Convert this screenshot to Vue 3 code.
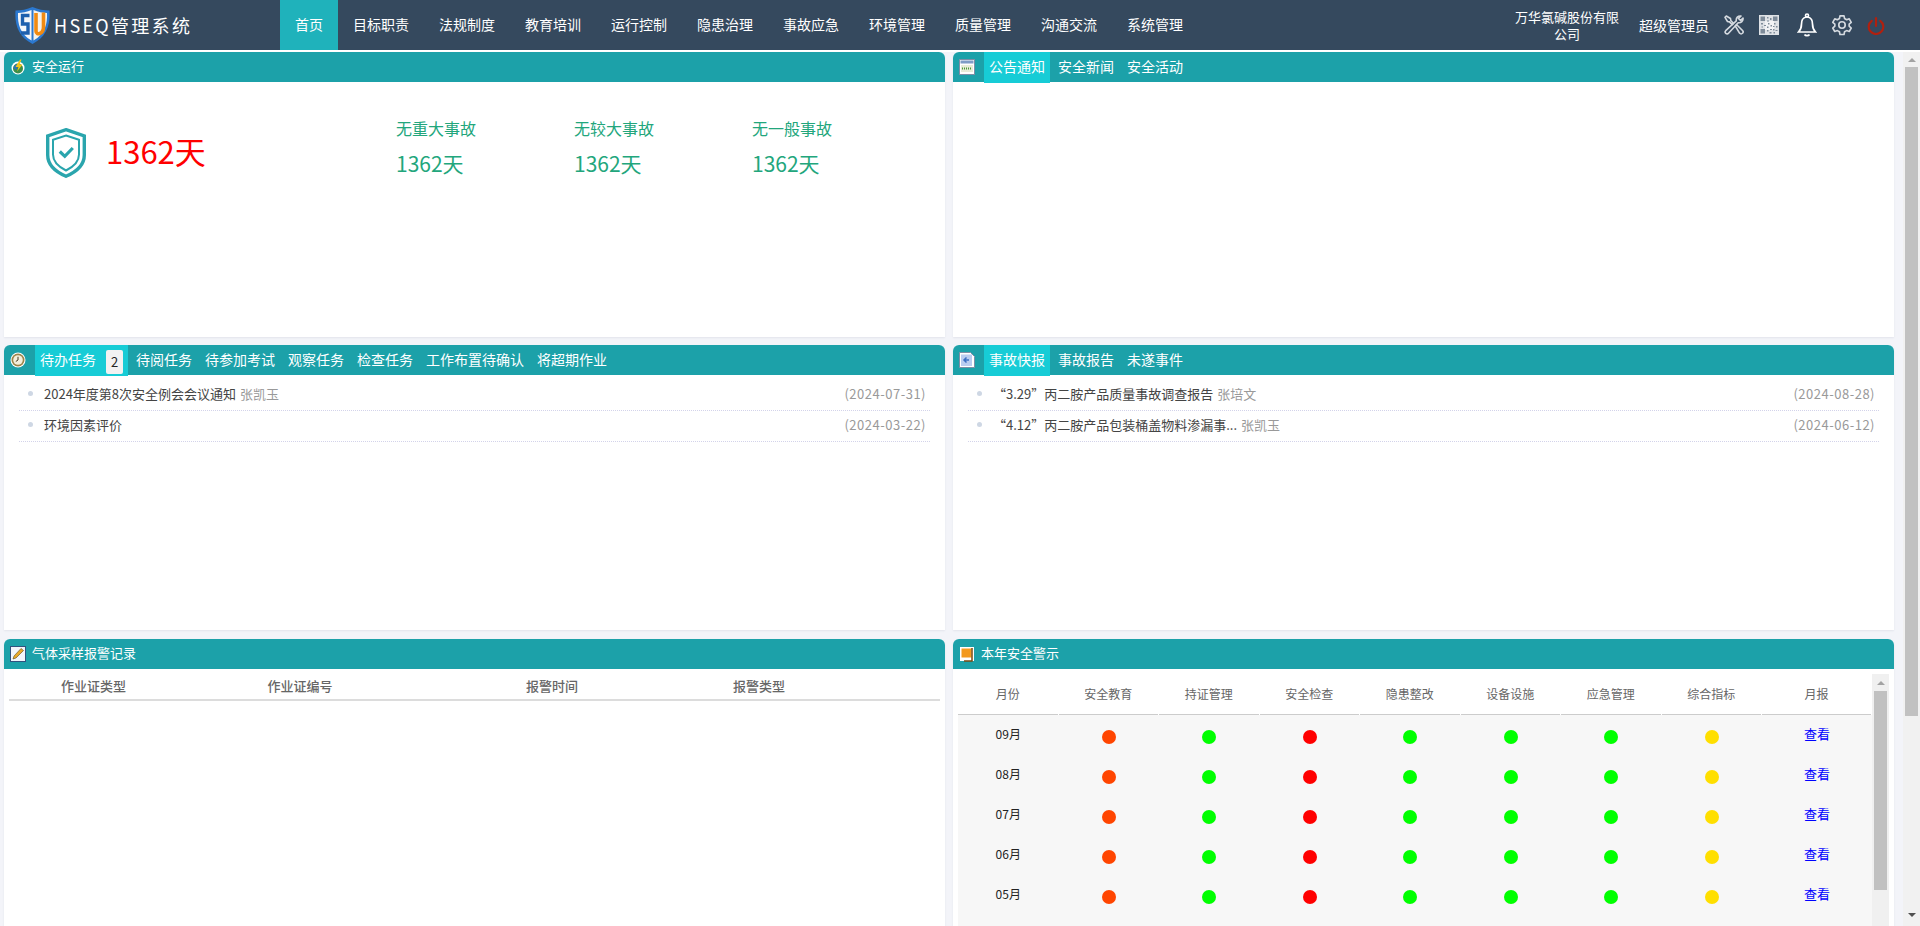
<script setup>
const nav = ['首页','目标职责','法规制度','教育培训','运行控制','隐患治理','事故应急','环境管理','质量管理','沟通交流','系统管理']
const stats = ['无重大事故','无较大事故','无一般事故']
const todo = [
  { t: '2024年度第8次安全例会会议通知', a: '张凯玉', d: '(2024-07-31)' },
  { t: '环境因素评价', a: '', d: '(2024-03-22)' }
]
const acc = [
  { t: '“3.29”丙二胺产品质量事故调查报告', a: '张培文', d: '(2024-08-28)' },
  { t: '“4.12”丙二胺产品包装桶盖物料渗漏事...', a: '张凯玉', d: '(2024-06-12)' }
]
const todoTabs = ['待阅任务','待参加考试','观察任务','检查任务','工作布置待确认','将超期作业']
const gasCols = ['作业证类型','作业证编号','报警时间','报警类型','']
const warnCols = ['月份','安全教育','持证管理','安全检查','隐患整改','设备设施','应急管理','综合指标','月报']
const months = ['09月','08月','07月','06月','05月']
const dots = ['#ff4500','#00ff00','#ff0000','#00ff00','#00ff00','#00ff00','#ffdf00']
</script>

<template>
  <div class="app">
    <header class="top">
      <div class="brand">
        <svg class="logo" viewBox="0 0 35 37">
          <path d="M17.500 0 C23 2.500 29 3.500 34.500 3.500 C35.500 18 31.500 30 17.500 37 C3.500 30 -0.500 18 0.500 3.500 C6 3.500 12 2.500 17.500 0Z" fill="#2b78d0"/>
          <path d="M16.500 3 C12 5 7 6 3 6 C2.500 17 5 27 16.500 33.500Z" fill="#f4f6fa"/>
          <path d="M18.500 3 C23 5 28 6 32 6 C32.500 17 30 27 18.500 33.500Z" fill="#f6f2ea"/>
          <path d="M14.500 8.500 H7.500 V17 H13 V26 H6" fill="none" stroke="#1d5fae" stroke-width="3.400"/>
          <path d="M21 6 V24 C21 29 28.500 27 28.500 20 V5.500" fill="none" stroke="#f08a12" stroke-width="3.600"/>
        </svg>
        <span class="brand-name">HSEQ管理系统</span>
      </div>
      <nav class="nav">
        <a v-for="(n, i) in nav" :key="n" class="nav-item" :class="{ on: i === 0 }">{{ n }}</a>
      </nav>
      <div class="top-right">
        <div class="company">万华氯碱股份有限公司</div>
        <div class="user">超级管理员</div>
        <svg class="ti i-tool" viewBox="0 0 20 20" fill="none" stroke="#d4d9df" stroke-width="1.600" stroke-linejoin="round">
          <path d="M12.300 5.800 C11.800 3 14 0.500 17 1 L14.500 3.500 L16.500 5.500 L19 3 C19.500 6 17 8.200 14.200 7.700 L4.500 18.300 a1.700 1.700 0 0 1 -2.800 -2.600Z"/>
          <path d="M1 2.300 L2.300 1 L6.500 3.500 L6.800 5.500 L9.500 8.200 L8.200 9.600 L5.500 6.900 L3.500 6.500Z"/>
          <path d="M11.300 11 L12.700 9.700 L18.500 15.500 a1.900 1.900 0 0 1 -2.800 2.800Z"/>
        </svg>
        <svg class="ti i-qr" viewBox="0 0 20 20">
          <rect width="20" height="20" fill="#dfe2e6"/>
          <rect x="6" y="6" width="9" height="9" fill="#f2f3f5"/>
          <g fill="#7e8b99">
            <rect x="1.500" y="1.500" width="4.500" height="4.500"/><rect x="14" y="1.500" width="4.500" height="4.500"/><rect x="1.500" y="14" width="4.500" height="4.500"/>
            <rect x="8" y="2" width="1.500" height="1.500"/><rect x="11" y="3" width="1.500" height="2"/><rect x="8" y="5.500" width="2" height="1"/>
            <rect x="2" y="8" width="2" height="1.500"/><rect x="5" y="10" width="2" height="1"/><rect x="2.500" y="11.500" width="1.500" height="1"/>
            <rect x="9" y="8" width="1.500" height="1.500"/><rect x="11.500" y="10" width="1.500" height="1.500"/><rect x="8" y="11.500" width="1.500" height="1.500"/>
            <rect x="15" y="8" width="1.500" height="1.500"/><rect x="14" y="11" width="1.500" height="1"/><rect x="17" y="11" width="1.500" height="1.500"/>
            <rect x="8" y="15" width="1.500" height="1.500"/><rect x="11" y="14" width="2" height="1"/><rect x="10.500" y="17" width="2" height="1.500"/>
            <rect x="14" y="14" width="1.500" height="1.500"/><rect x="16.500" y="15" width="2" height="1"/><rect x="14.500" y="17" width="1.500" height="1.500"/>
          </g>
        </svg>
        <svg class="ti i-bell" viewBox="0 0 20 24" fill="none" stroke="#fff" stroke-width="1.700">
          <circle cx="10" cy="2.500" r="1.500"/>
          <path d="M10 4 C5.500 4 4.500 8 4.500 11 C4.500 15 3.500 17 1.500 19 H18.500 C16.500 17 15.500 15 15.500 11 C15.500 8 14.500 4 10 4Z"/>
          <path d="M7.500 21.500 C8.500 23 11.500 23 12.500 21.500"/>
        </svg>
        <svg class="ti i-gear" viewBox="0 0 24 24" fill="none" stroke="#d4d9df" stroke-width="1.800">
          <circle cx="12" cy="12" r="3.500"/>
          <path d="M9.800 2 h4.400 l0.600 3 l2.200 1.300 l2.900 -1 l2.200 3.800 l-2.300 2 v2.200 l2.300 2 l-2.200 3.800 l-2.900 -1 l-2.200 1.300 l-0.600 3 h-4.400 l-0.600 -3 l-2.200 -1.300 l-2.900 1 l-2.200 -3.800 l2.300 -2 v-2.200 l-2.300 -2 l2.200 -3.800 l2.900 1 l2.200 -1.300Z" stroke-linejoin="round"/>
        </svg>
        <svg class="ti i-power" viewBox="0 0 18 18" fill="none" stroke="#b0200f" stroke-width="2.200" stroke-linecap="round">
          <path d="M9 1.200 V9"/>
          <path d="M4.700 3.800 A7.300 7.300 0 1 0 13.300 3.800"/>
        </svg>
      </div>
    </header>

    <div class="below">
      <main class="grid">
        <section class="panel p1">
          <div class="phead">
            <svg class="picon" viewBox="0 0 16 16">
              <circle cx="8" cy="9" r="6.500" fill="#fff"/>
              <circle cx="8" cy="9.500" r="5" fill="#3d8f4a"/>
              <path d="M3.500 9 a5 5 0 0 1 5 -4 l-2 6Z" fill="#2c72b8"/>
              <path d="M10 0.500 L5.500 8 H8.500 L7 12.500 L12.500 5.500 H9.500 L11.500 0.500Z" fill="#f5c518"/>
            </svg>
            <span class="ptitle">安全运行</span>
          </div>
          <div class="safe">
            <div class="safe-main">
              <svg class="shield" viewBox="0 0 40 50" fill="none" stroke="#2aa5ad">
                <path d="M20 1.700 L38.300 8 V27 C38.300 37 30 44 20 48.300 C10 44 1.700 37 1.700 27 V8Z" stroke-width="3.400"/>
                <path d="M20 7.500 L33 11.800 V26.500 C33 34 27 39 20 42.500 C13 39 7 34 7 26.500 V11.800Z" stroke-width="2"/>
                <path d="M13.800 23.500 L18.800 28.300 L26.800 20" stroke-width="3.200"/>
              </svg>
              <span class="safe-days">1362天</span>
            </div>
            <div class="stats">
              <div v-for="s in stats" :key="s" class="stat">
                <div class="stat-l">{{ s }}</div>
                <div class="stat-v">1362天</div>
              </div>
            </div>
          </div>
        </section>

        <section class="panel p1">
          <div class="phead">
            <svg class="picon" viewBox="0 0 16 16">
              <rect x="0.500" y="0.500" width="15" height="15" fill="#fff" stroke="#7d8ea6"/>
              <rect x="1.500" y="1.500" width="13" height="3" fill="#7f9cc7"/>
              <rect x="2" y="6" width="12" height="7" fill="#e8ecd8"/>
              <path d="M3 9.500 H13" stroke="#4d9a3a" stroke-width="2" stroke-dasharray="1 1"/>
            </svg>
            <div class="tabs">
              <a class="tab on">公告通知</a>
              <a class="tab">安全新闻</a>
              <a class="tab">安全活动</a>
            </div>
          </div>
        </section>

        <section class="panel p2">
          <div class="phead">
            <svg class="picon" viewBox="0 0 16 16">
              <circle cx="8" cy="8" r="7.500" fill="#fff"/>
              <circle cx="8" cy="8" r="6.500" fill="#9c8448"/>
              <circle cx="8" cy="8" r="4.800" fill="#f4efdc"/>
              <path d="M8 4.800 V8 L5.800 9.500" fill="none" stroke="#4a3d20" stroke-width="1"/>
            </svg>
            <div class="tabs">
              <a class="tab on">待办任务<span class="badge">2</span></a>
              <a v-for="t in todoTabs" :key="t" class="tab">{{ t }}</a>
            </div>
          </div>
          <ul class="list">
            <li v-for="r in todo" :key="r.d" class="row">
              <i class="bullet"></i>
              <span class="row-t">{{ r.t }}</span>
              <span class="row-a">{{ r.a }}</span>
              <span class="row-d">{{ r.d }}</span>
            </li>
          </ul>
        </section>

        <section class="panel p2">
          <div class="phead">
            <svg class="picon" viewBox="0 0 16 16">
              <path d="M0.500 0.500 H11.500 L15.500 4.500 V15.500 H0.500Z" fill="#fff" stroke="#7d8ea6"/>
              <rect x="2" y="2.500" width="11" height="11.500" fill="#b9cdf0"/>
              <path d="M10 8 H5 M7.500 5.500 L5 8 L7.500 10.500" fill="none" stroke="#3b6fc4" stroke-width="1.500"/>
            </svg>
            <div class="tabs">
              <a class="tab on">事故快报</a>
              <a class="tab">事故报告</a>
              <a class="tab">未遂事件</a>
            </div>
          </div>
          <ul class="list">
            <li v-for="r in acc" :key="r.d" class="row">
              <i class="bullet"></i>
              <span class="row-t">{{ r.t }}</span>
              <span class="row-a">{{ r.a }}</span>
              <span class="row-d">{{ r.d }}</span>
            </li>
          </ul>
        </section>

        <section class="panel p3">
          <div class="phead">
            <svg class="picon" viewBox="0 0 16 16">
              <rect x="0.500" y="0.500" width="15" height="15" fill="#f1f5fb" stroke="#32527e"/>
              <path d="M3 13 L4 10 L11 2.500 L13.500 4.500 L6 12Z" fill="#e8a92a" stroke="#5c4a1c" stroke-width="0.600"/>
            </svg>
            <span class="ptitle">气体采样报警记录</span>
          </div>
          <div class="gas">
            <div v-for="(c, i) in gasCols" :key="i" class="gas-h">{{ c }}</div>
          </div>
        </section>

        <section class="panel p3">
          <div class="phead">
            <svg class="picon" viewBox="0 0 16 16">
              <rect x="1" y="1" width="14" height="14" fill="#fff"/>
              <rect x="2.500" y="2.500" width="10" height="9" fill="#f39a1f"/>
              <path d="M13 2 V15 H5" fill="none" stroke="#7a4a12" stroke-width="1.500"/>
            </svg>
            <span class="ptitle">本年安全警示</span>
          </div>
          <div class="warn">
            <div class="warn-table">
              <div class="wt-head">
                <div v-for="c in warnCols" :key="c" class="wt-h">{{ c }}</div>
              </div>
              <div class="wt-body">
                <div v-for="m in months" :key="m" class="wt-row">
                  <div class="wt-m">{{ m }}</div>
                  <div v-for="(d, i) in dots" :key="i" class="wt-c"><i class="dot" :style="{ background: d }"></i></div>
                  <a class="wt-l">查看</a>
                </div>
              </div>
            </div>
            <div class="mini-sb">
              <div class="mini-up"></div>
              <div class="mini-thumb"></div>
            </div>
          </div>
        </section>
      </main>

      <aside class="page-sb">
        <div class="up"></div>
        <div class="thumb"></div>
        <div class="down"></div>
      </aside>
    </div>
  </div>
</template>

<style>
html, body { margin: 0; padding: 0; overflow: hidden; background: #f3f4f9; }
</style>

<style scoped>
.app {
  width: 1920px;
  height: 926px;
  overflow: hidden;
  display: flex;
  flex-direction: column;
  font-family: "Noto Sans CJK SC", "Noto Sans", sans-serif;
  font-size: 13px;
  color: #333;
  background: #f3f4f9;
}
a { cursor: pointer; }
ul { margin: 0; padding: 0; list-style: none; }

.top { height: 50px; flex: none; background: #35495e; display: flex; align-items: center; color: #fff; }
.brand { width: 280px; flex: none; display: flex; align-items: center; padding-left: 15px; box-sizing: border-box; }
.logo { width: 35px; height: 37px; flex: none; }
.brand-name { margin-left: 4px; font-size: 18px; letter-spacing: 2.300px; white-space: nowrap; }
.nav { display: flex; height: 50px; }
.nav-item { padding: 0 15px; line-height: 49px; font-size: 14px; color: #fff; white-space: nowrap; }
.nav-item.on { background: #1fb2bb; }
.top-right { margin-left: auto; display: flex; align-items: center; padding-right: 35px; }
.company { width: 110px; font-size: 13px; line-height: 17px; text-align: center; margin-left: -1px; }
.user { margin-left: 17px; font-size: 14px; white-space: nowrap; }
.ti { flex: none; display: block; }
.i-tool { width: 20px; height: 20px; margin-left: 15px; }
.i-qr { width: 20px; height: 20px; margin-left: 15px; }
.i-bell { width: 20px; height: 24px; margin-left: 18px; }
.i-gear { width: 22px; height: 22px; margin-left: 14px; }
.i-power { width: 18px; height: 18px; margin-left: 14px; margin-top: 2px; }

.below { flex: 1; display: flex; min-height: 0; border-top: 2px solid #fff; }
.grid {
  width: 1903px;
  flex: none;
  box-sizing: border-box;
  padding-left: 4px;
  display: grid;
  grid-template-columns: 941px 941px;
  grid-template-rows: 285px 285px 400px;
  column-gap: 8px;
  row-gap: 8px;
  align-content: start;
}
.panel { background: #fff; border-radius: 6px 6px 0 0; box-shadow: 0 1px 2px rgba(40, 50, 80, 0.08); min-width: 0; }
.p3 { margin-top: 1px; }
.phead {
  height: 30px;
  background: #1ca1a9;
  border-radius: 6px 6px 0 0;
  display: flex;
  align-items: flex-start;
  padding-left: 6px;
  color: #fff;
}
.picon { width: 16px; height: 16px; flex: none; margin-top: 7px; }
.ptitle { margin-left: 6px; font-size: 13px; line-height: 28px; }
.tabs { display: flex; margin-left: 9px; column-gap: 3px; }
.tab { height: 31px; padding: 0 5px; font-size: 14px; line-height: 29px; color: #fff; display: flex; white-space: nowrap; }
.tab.on { background: #17ccd6; }
.badge {
  width: 17px;
  height: 24px;
  margin: 5px 0 0 10px;
  background: #f2f2f2;
  border-radius: 2px;
  color: #222;
  font-size: 13px;
  line-height: 24px;
  text-align: center;
}

.safe { display: flex; height: 255px; }
.safe-main { display: flex; align-items: flex-start; padding: 46px 0 0 42px; width: 392px; box-sizing: border-box; }
.shield { width: 40px; height: 50px; flex: none; }
.safe-days { margin-left: 20px; font-size: 31px; line-height: 46px; color: #f00; white-space: nowrap; }
.stats { display: flex; padding-top: 35px; }
.stat { width: 178px; color: #22a67c; }
.stat-l { font-size: 16px; line-height: 22px; }
.stat-v { margin-top: 9px; font-size: 21px; line-height: 30px; }

.list { padding: 5px 15px 0; }
.row { height: 27px; padding-bottom: 3px; border-bottom: 1px dotted #d3d3ea; display: flex; align-items: center; }
.bullet { width: 5px; height: 5px; border-radius: 50%; background: #ced7e4; margin-left: 9px; flex: none; }
.row-t { margin-left: 11px; font-size: 13px; color: #444; white-space: nowrap; }
.row-a { margin-left: 4px; font-size: 13px; color: #999; white-space: nowrap; }
.row-d { margin-left: auto; margin-right: 4px; font-size: 13px; letter-spacing: 0.500px; color: #999; white-space: nowrap; }

.gas {
  display: grid;
  grid-template-columns: 169px 244px 260px 154px 1fr;
  margin: 0 5px;
  height: 30px;
  border-bottom: 2px solid #dcdcdc;
}
.gas-h { text-align: center; font-size: 13px; line-height: 34px; color: #666; font-weight: 500; }

.warn { display: flex; padding: 5px 5px 0; height: 360px; box-sizing: border-box; }
.warn-table { width: 914px; flex: none; }
.wt-head, .wt-row { display: grid; grid-template-columns: repeat(8, 100.5px) 1fr; }
.wt-head { height: 41px; }
.wt-h { margin-right: 1px; border-bottom: 1px solid #ccc; box-sizing: border-box; height: 41px; text-align: center; font-size: 12px; line-height: 40px; color: #666; }
.wt-body { background: #f7f7f7; height: 320px; padding-top: 1px; }
.wt-row { height: 40px; }
.wt-m { text-align: center; font-size: 12px; line-height: 36px; color: #222; }
.wt-c { display: flex; justify-content: center; padding-top: 14px; box-sizing: border-box; }
.dot { width: 14px; height: 14px; border-radius: 50%; display: block; }
.wt-l { text-align: center; font-size: 13px; line-height: 36px; color: #00f; }

.mini-sb { width: 17px; flex: none; background: #f0f0f0; display: flex; flex-direction: column; align-items: center; }
.mini-up { width: 0; height: 0; border-left: 4px solid transparent; border-right: 4px solid transparent; border-bottom: 4px solid #a3a3a3; margin-top: 7px; }
.mini-thumb { width: 13px; height: 199px; background: #c1c1c1; margin-top: 6px; }

.page-sb { width: 17px; flex: none; background: #f1f1f1; display: flex; flex-direction: column; align-items: center; }
.up { width: 0; height: 0; border-left: 4px solid transparent; border-right: 4px solid transparent; border-bottom: 4px solid #a3a3a3; margin-top: 6px; }
.thumb { width: 13px; height: 649px; background: #c1c1c1; margin-top: 5px; }
.down { width: 0; height: 0; border-left: 4px solid transparent; border-right: 4px solid transparent; border-top: 4px solid #505050; margin-top: auto; margin-bottom: 9px; }
</style>
